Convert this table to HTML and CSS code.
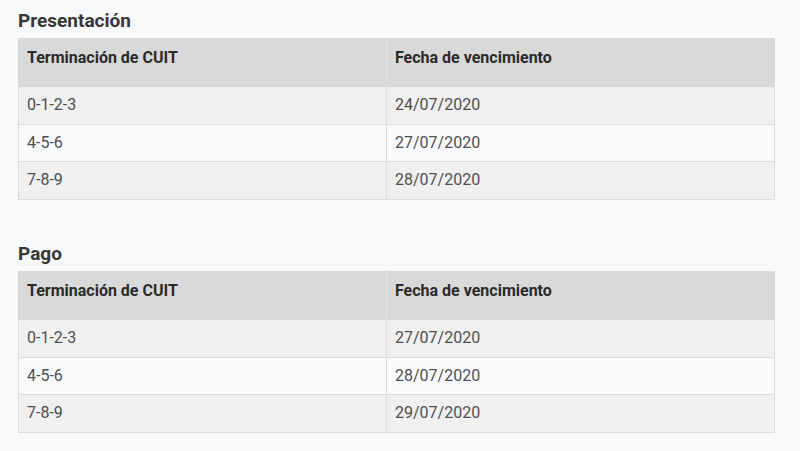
FILE: index.html
```html
<!DOCTYPE html>
<html>
<head>
  <title>Vencimientos</title>
  <link rel="stylesheet" href="styles.css">
</head>
<body>
  <section class="block">
    <h2 class="block-title">Presentación</h2>
    <table class="due-table">
      <thead>
        <tr><th>Terminación de CUIT</th><th>Fecha de vencimiento</th></tr>
      </thead>
      <tbody>
        <tr><td>0-1-2-3</td><td>24/07/2020</td></tr>
        <tr><td>4-5-6</td><td>27/07/2020</td></tr>
        <tr><td>7-8-9</td><td>28/07/2020</td></tr>
      </tbody>
    </table>
  </section>

  <section class="block">
    <h2 class="block-title">Pago</h2>
    <table class="due-table">
      <thead>
        <tr><th>Terminación de CUIT</th><th>Fecha de vencimiento</th></tr>
      </thead>
      <tbody>
        <tr><td>0-1-2-3</td><td>27/07/2020</td></tr>
        <tr><td>4-5-6</td><td>28/07/2020</td></tr>
        <tr><td>7-8-9</td><td>29/07/2020</td></tr>
      </tbody>
    </table>
  </section>
</body>
</html>
```

FILE: styles.css
```css
body {
  margin: 0;
  padding: 9px 25px 0 18px;
  font-family: Roboto, "Liberation Sans", sans-serif;
  background-color: #f8f9fa;
  color: #4f4f4f;
}
.block {
  margin-bottom: 42px;
}
.block:last-child {
  margin-bottom: 0;
}
.block-title {
  margin: 0 0 6px;
  font-size: 19px;
  font-weight: 700;
  line-height: 23px;
  color: #363636;
}
.due-table {
  width: 100%;
  border-collapse: collapse;
  font-size: 16px;
}
th, td {
  text-align: left;
  border: 1px solid #dcdcdc;
}
th {
  padding: 9px 8px 19px;
  line-height: 19px;
  background-color: #d9d9d9;
  color: #2b2b2b;
  font-weight: 700;
  border-color: #d9d9d9;
  border-right-color: #e4e4e4;
}
th:first-child {
  width: 351px;
}
th:last-child {
  border-right-color: #d9d9d9;
}
td {
  padding: 8px 8px;
  line-height: 20.67px;
}
tbody tr:nth-child(odd) {
  background-color: #f0f0f0;
}
tbody tr:nth-child(even) {
  background-color: #f9fafb;
}
```
